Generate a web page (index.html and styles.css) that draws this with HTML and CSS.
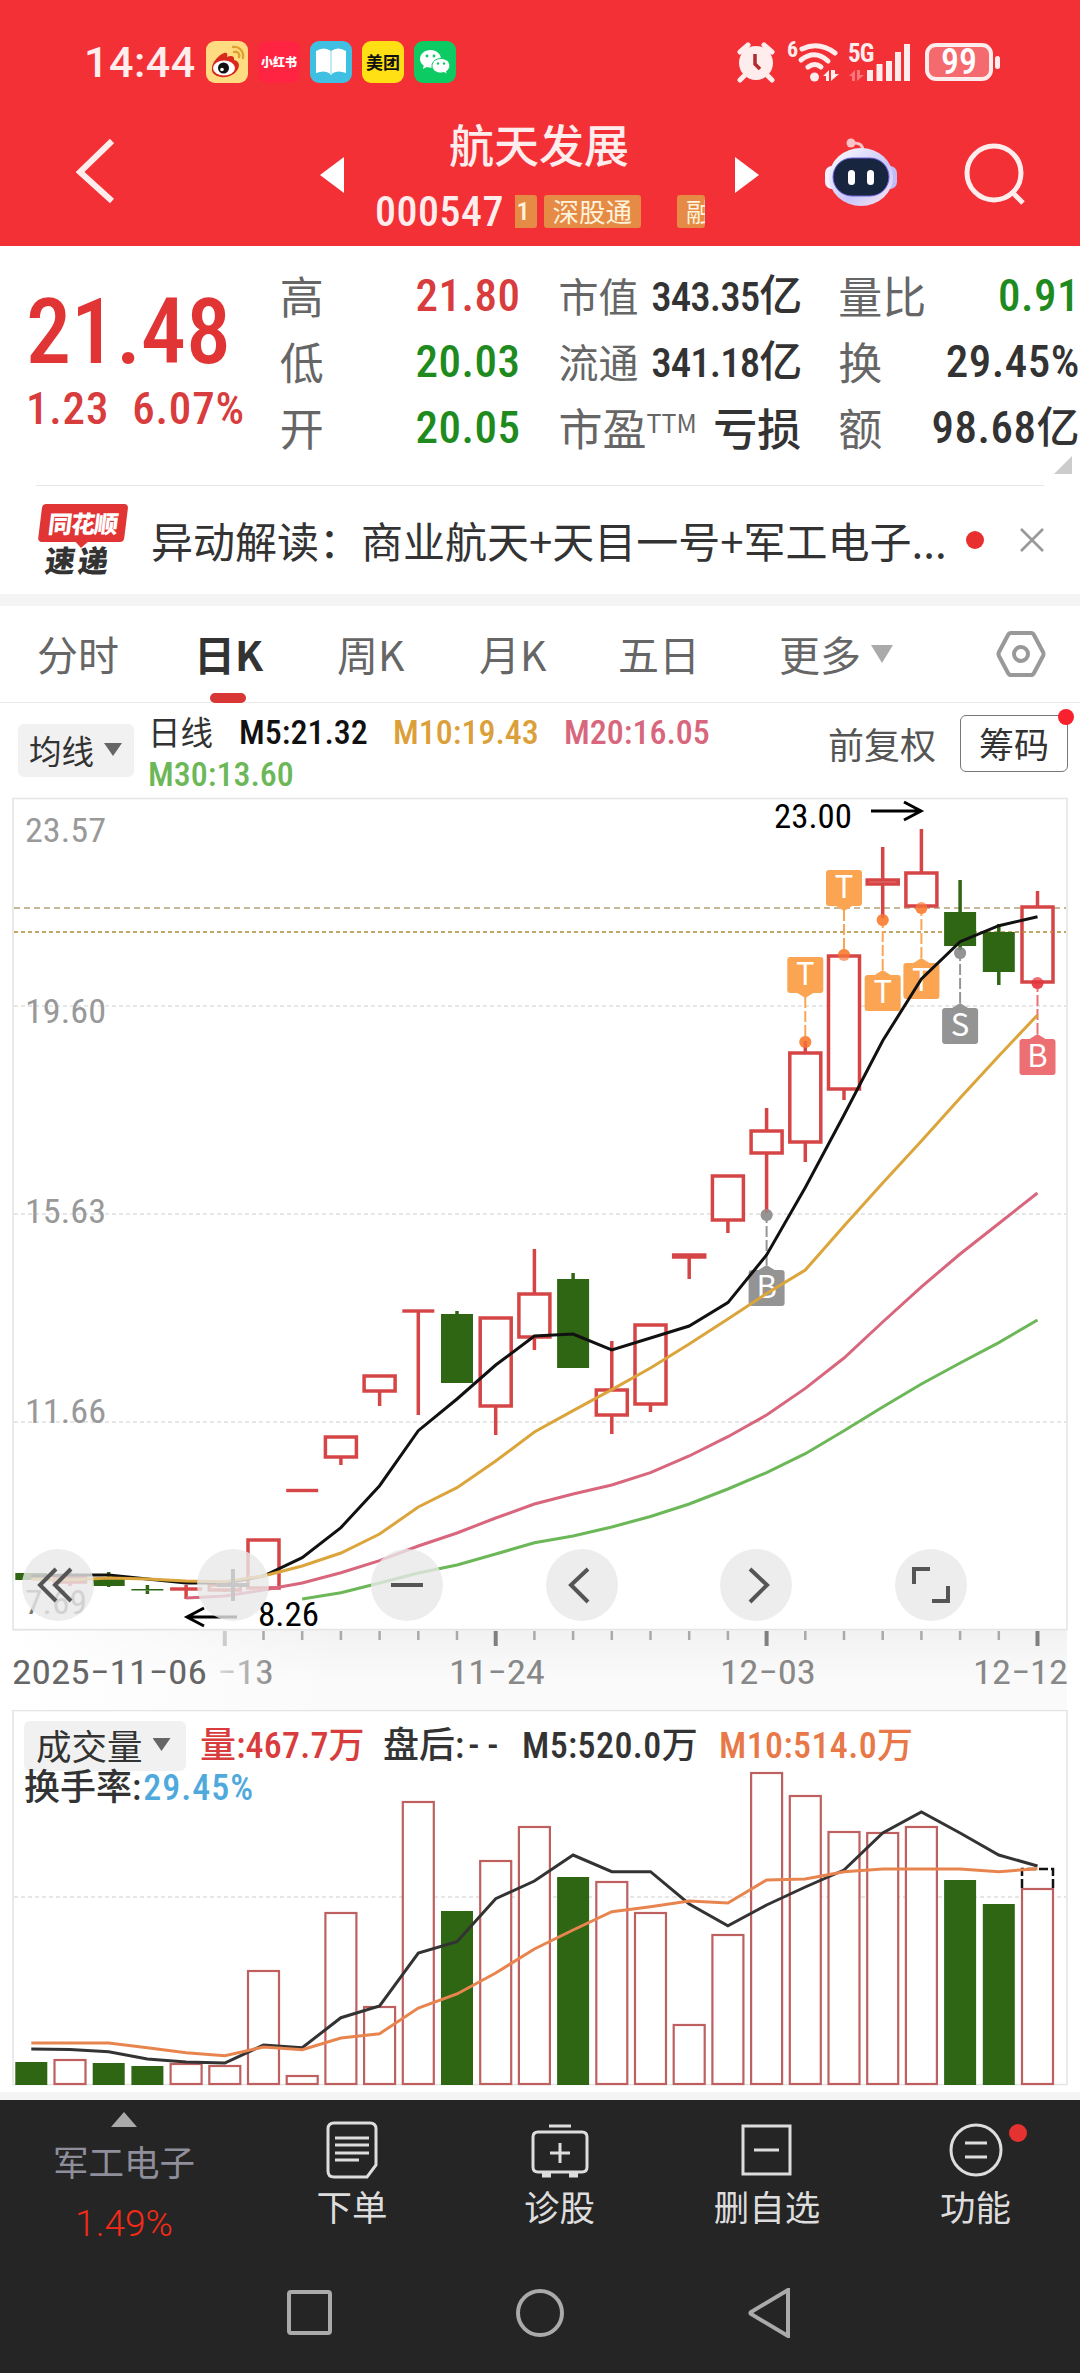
FILE: index.html
```html
<!DOCTYPE html>
<html lang="zh-CN">
<head>
    <meta charset="UTF-8">
    <meta name="viewport" content="width=device-width, initial-scale=1.0">
    <title>航天发展 000547</title>
    <link rel="stylesheet" href="styles.css">
</head>
<body>
    <div class="status-bar">
        <span class="clock num">14:44</span>
        <div class="app-icons">
            <svg class="app" viewBox="0 0 42 42">
                <rect width="42" height="42" rx="9" fill="#ffdc82"/>
                <path d="M6 27c0-6 7-13 12-15 3-1 4 1 3 4 4-2 8-1 7 3 5 1 6 5 4 9-3 6-11 9-17 8C9 35 5 32 6 27z" fill="#d9281c"/>
                <ellipse cx="18" cy="27" rx="11" ry="7.5" fill="#fff"/>
                <circle cx="17.500" cy="27" r="5.500" fill="#111"/>
                <circle cx="16" cy="28.500" r="1.800" fill="#fff"/>
                <path d="M27 6c6-1 11 4 10 11M28 11c4-1 6 2 5 5" fill="none" stroke="#e0a030" stroke-width="2.400" stroke-linecap="round"/>
            </svg>
            <span class="app app-red">小红书</span>
            <svg class="app" viewBox="0 0 42 42">
                <rect width="42" height="42" rx="9" fill="#3fbfe2"/>
                <path d="M6 10q8-5 15 0 7-5 15 0v22q-8-3-13 0l-2 2-2-2q-5-3-13 0z" fill="#fff"/>
                <path d="M21 10v23" stroke="#bfe9f5" stroke-width="2"/>
            </svg>
            <span class="app app-yellow">美团</span>
            <svg class="app" viewBox="0 0 42 42">
                <rect width="42" height="42" rx="9" fill="#0bcb62"/>
                <path d="M16.500 9C10.500 9 6 13 6 18c0 3 1.500 5 3.700 6.600L9 28l3.700-2 4 .7C23 26.500 27 22.700 27 18S22.500 9 16.500 9z" fill="#fff"/>
                <path d="M27 17.500c-5 0-9 3-9 7.300s4 7.300 9 7.300l3-.5 3.200 1.700-.7-2.900c2-1.300 3.300-3.300 3.300-5.600 0-4.300-3.800-7.300-8.800-7.300z" fill="#fff" stroke="#0bcb62"/>
                <g fill="#0bcb62"><circle cx="13" cy="15" r="1.400"/><circle cx="20" cy="15" r="1.400"/><circle cx="24" cy="22.500" r="1.200"/><circle cx="30" cy="22.500" r="1.200"/></g>
            </svg>
        </div>
        <svg class="alarm" width="38" height="40" viewBox="0 0 38 40">
            <circle cx="19" cy="21" r="17" fill="#ffecec"/>
            <path d="M3 10l8-7M35 10l-8-7M7 34l-4 4M31 34l4 4" stroke="#ffecec" stroke-width="5" stroke-linecap="round"/>
            <path d="M18 12v10l5 5" fill="none" stroke="#b52a2e" stroke-width="3.500"/>
        </svg>
        <svg class="wifi" width="54" height="40" viewBox="0 0 54 40">
            <text x="0" y="15" class="tiny">6</text>
            <g fill="none" stroke="#ffecec" stroke-width="5" stroke-linecap="round">
                <path d="M15 7Q32-1 48 11"/><path d="M14 18Q28 7 41 19"/><path d="M21 25q7-5 13 0"/>
            </g>
            <circle cx="27.500" cy="35" r="4.500" fill="#ffecec"/>
            <path d="M36 34l6-6v11h-3v-5zM44 28v11l8-7h-4v-4z" fill="#ffecec"/>
        </svg>
        <svg class="signal" width="64" height="40" viewBox="0 0 64 40">
            <text x="0" y="20" class="net">5G</text>
            <path d="M1 34l6-6v11H4v-5zM9 28v11l7-6h-4v-5z" fill="#f6777a"/>
            <path d="M22 39V28M31.500 39V22M41 39V19M50 39V10M59 39V2" stroke="#ffecec" stroke-width="6"/>
        </svg>
        <div class="battery num">99</div>
        <div class="battery-nub"></div>
    </div>

    <div class="title-bar">
        <svg class="back" width="40" height="66" viewBox="0 0 40 66"><path d="M36 3L4 34l32 29" fill="none" stroke="#ffecec" stroke-width="6"/></svg>
        <svg class="prev" width="24" height="36" viewBox="0 0 24 36"><path d="M24 0v36L0 18z" fill="#fff"/></svg>
        <div class="stock">
            <div class="stock-name">航天发展</div>
            <div class="stock-code">
                <span class="code num">000547</span>
                <span class="tag tag-cut num">1</span>
                <span class="tag">深股通</span>
                <span class="tag tag-last">融</span>
            </div>
        </div>
        <svg class="next" width="24" height="36" viewBox="0 0 24 36"><path d="M0 0v36l24-18z" fill="#fff"/></svg>
        <svg class="robot" width="74" height="70" viewBox="0 0 74 70">
            <defs>
                <linearGradient id="shell" x1="0" y1="0" x2="1" y2="1">
                    <stop offset="0" stop-color="#fff"/><stop offset=".6" stop-color="#c9c6fa"/><stop offset="1" stop-color="#ffe9ee"/>
                </linearGradient>
            </defs>
            <path d="M28 6q11-1 11 8" fill="none" stroke="#fbc3c8" stroke-width="3"/>
            <circle cx="27" cy="6" r="4.500" fill="#fbc3c8"/>
            <rect x="1" y="29" width="14" height="23" rx="7" fill="#f4f0ff"/>
            <rect x="59" y="29" width="14" height="23" rx="7" fill="#c0bcf8"/>
            <ellipse cx="37" cy="40" rx="32" ry="29" fill="url(#shell)"/>
            <rect x="9" y="21" width="56" height="38" rx="19" fill="#17253f" stroke="#6d62dd"/>
            <rect x="24" y="33" width="7" height="15" rx="3.500" fill="#fff"/>
            <rect x="43" y="33" width="7" height="15" rx="3.500" fill="#fff"/>
        </svg>
        <svg class="search" width="62" height="62" viewBox="0 0 62 62"><circle cx="30" cy="30" r="27" fill="none" stroke="#ffecec" stroke-width="5"/><path d="M48 49l11 11" stroke="#ffecec" stroke-width="5"/></svg>
    </div>

    <div class="quote">
        <div class="price-box">
            <div class="price num">21.48</div>
            <div class="change num"><span>1.23</span><span>6.07%</span></div>
        </div>
        <div class="col col-a">
            <div class="row"><span class="label">高</span><span class="val num red">21.80</span></div>
            <div class="row"><span class="label">低</span><span class="val num green">20.03</span></div>
            <div class="row"><span class="label">开</span><span class="val num green">20.05</span></div>
        </div>
        <div class="col col-b">
            <div class="row small"><span class="label">市值</span><span class="val num">343.35<i>亿</i></span></div>
            <div class="row small"><span class="label">流通</span><span class="val num">341.18<i>亿</i></span></div>
            <div class="row"><span class="label">市盈<sup>TTM</sup></span><span class="val word">亏损</span></div>
        </div>
        <div class="col col-c">
            <div class="row"><span class="label">量比</span><span class="val num green">0.91</span></div>
            <div class="row"><span class="label">换</span><span class="val num">29.45%</span></div>
            <div class="row"><span class="label">额</span><span class="val num">98.68<i>亿</i></span></div>
        </div>
        <div class="corner"></div>
    </div>

    <div class="news">
        <div class="news-logo">
            <div class="logo-top">同花顺</div>
            <div class="logo-bottom">速递</div>
        </div>
        <div class="news-text">异动解读：商业航天+天目一号+军工电子...</div>
        <div class="news-dot"></div>
        <svg class="close" width="26" height="26" viewBox="0 0 26 26"><path d="M2 2l22 22M24 2L2 24" stroke="#999" stroke-width="2.600"/></svg>
    </div>

    <div class="tabs">
        <span class="tab t1">分时</span>
        <span class="tab t2 active">日K</span>
        <span class="tab t3">周K</span>
        <span class="tab t4">月K</span>
        <span class="tab t5">五日</span>
        <span class="tab t6">更多</span>
        <div class="arrow-down light"></div>
        <svg class="setting" width="50" height="48" viewBox="0 0 50 48"><path d="M15 3h20q2 0 3 2l9 17q1 2 0 4l-9 17q-1 2-3 2H15q-2 0-3-2L3 26q-1-2 0-4l9-17q1-2 3-2z" fill="none" stroke="#999" stroke-width="4"/><circle cx="25" cy="24" r="7" fill="none" stroke="#999" stroke-width="4"/></svg>
    </div>

    <div class="ma-bar">
        <div class="chip">均线<div class="arrow-down"></div></div>
        <div class="ma-list">
            <span class="ma-name">日线</span>
            <span class="num m5">M5:21.32</span>
            <span class="num m10">M10:19.43</span>
            <span class="num m20">M20:16.05</span>
            <span class="num m30">M30:13.60</span>
        </div>
        <span class="adjust">前复权</span>
        <div class="chips-btn">筹码</div>
    </div>

    <div class="k-chart">
        <svg id="kline" width="1080" height="920" viewBox="0 790 1080 920"></svg>
        <div class="tools">
            <span class="tool"><svg viewBox="0 0 72 72"><path d="M34 20L18 36l16 16M49 20L33 36l16 16"/></svg></span>
            <span class="tool faint"><svg viewBox="0 0 72 72"><path d="M36 20v32M20 36h32"/></svg></span>
            <span class="tool"><svg viewBox="0 0 72 72"><path d="M20 36h32"/></svg></span>
            <span class="tool"><svg viewBox="0 0 72 72"><path d="M42 20L25 36l17 17"/></svg></span>
            <span class="tool"><svg viewBox="0 0 72 72"><path d="M30 20l17 16-17 17"/></svg></span>
            <span class="tool"><svg viewBox="0 0 72 72"><path d="M19 35V20h16M53 37v15H37"/></svg></span>
        </div>
    </div>

    <div class="vol-chart">
        <svg id="volume" width="1080" height="382" viewBox="0 1710 1080 382"></svg>
        <div class="vol-legend">
            <div class="vol-row">
                <div class="chip chip-vol">成交量<div class="arrow-down"></div></div>
                <span class="num v1 red">量:467.7万</span>
                <span class="num v2">盘后:<i>--</i></span>
                <span class="num v3">M5:520.0万</span>
                <span class="num v4">M10:514.0万</span>
            </div>
            <div class="turnover num">换手率:<span>29.45%</span></div>
        </div>
    </div>

    <div class="toolbar">
        <div class="item index">
            <div class="arrow-up"></div>
            <div class="index-name">军工电子</div>
            <div class="index-rate num">1.49%</div>
        </div>
        <div class="item">
            <svg viewBox="0 0 60 60"><path d="M12 3h36q6 0 6 6v36L45 57H12q-6 0-6-6V9q0-6 6-6z"/><path d="M13 18h34M13 25h34M13 33h34M13 40h24"/></svg>
            下单
        </div>
        <div class="item">
            <svg viewBox="0 0 60 60"><path d="M19 6h22M8 12h44q5 0 5 5v30q0 5-5 5H8q-5 0-5-5V17q0-5 5-5zM30 23v20M20 33h20"/><path d="M12 55h9M39 55h9" stroke-width="5"/></svg>
            诊股
        </div>
        <div class="item">
            <svg viewBox="0 0 60 60"><path d="M6 6h47v48H6zM17 30h25"/></svg>
            删自选
        </div>
        <div class="item more">
            <svg viewBox="0 0 60 60"><circle cx="30" cy="30" r="25"/><path d="M19 23h22M19 37h22"/></svg>
            功能
            <div class="more-dot"></div>
        </div>
    </div>

    <div class="nav">
        <svg width="50" height="50" viewBox="0 0 50 50"><rect x="4" y="4" width="41" height="41" rx="2"/></svg>
        <svg width="50" height="50" viewBox="0 0 50 50"><circle cx="25" cy="25" r="22"/></svg>
        <svg width="50" height="50" viewBox="0 0 50 50"><path d="M43 2v46L6 26q-1-1 0-2z"/></svg>
    </div>

    <script src="script.js"></script>
</body>
</html>
```

FILE: styles.css
```css
body{
  margin:0;
  width:1080px;
  background:#fff;
  font-family:"Noto Sans CJK SC", sans-serif;
  color:#333;
  overflow-x:hidden;
}
.num{
  font-family:Roboto, "Noto Sans CJK SC", sans-serif;
  font-stretch:75%;
  font-weight:500;
  white-space:nowrap;
}
i{ font-style:normal; }
.red{ color:#d83c3c; }
.green{ color:#1f8b1f; }

/* status bar */
.status-bar{
  display:flex;
  align-items:center;
  height:124px;
  background:#f23036;
  color:#ffecec;
}
.status-bar svg{ overflow:visible; }
.clock{
  width:110px;
  margin-left:84px;
  font-size:43px;
  font-stretch:90%;
  letter-spacing:.5px;
}
.app-icons{
  display:flex;
  gap:10px;
  margin-left:12px;
}
.app{
  width:42px;
  height:42px;
  border-radius:9px;
  line-height:42px;
  text-align:center;
  white-space:nowrap;
}
.app-red{
  background:#ff2442;
  color:#fff;
  font-size:12px;
  font-weight:900;
}
.app-yellow{
  background:#ffe014;
  color:#111;
  font-size:17px;
  font-weight:700;
}
.alarm{ margin-left:281px; }
.wifi{ margin-left:12px; }
.signal{ margin-left:7px; }
.tiny{ font:700 22px Roboto, sans-serif; font-stretch:75%; fill:#ffecec; }
.net{ font:700 25px Roboto, sans-serif; font-stretch:75%; fill:#ffecec; letter-spacing:-1px; }
.battery{
  box-sizing:border-box;
  width:68px;
  height:38px;
  margin-left:13px;
  border:4px solid #ffecec;
  border-radius:11px;
  background:#f56a6e;
  color:#fff;
  font-size:36px;
  font-stretch:85%;
  line-height:31px;
  text-align:center;
}
.battery-nub{
  width:5px;
  height:13px;
  margin-left:2px;
  border-radius:3px;
  background:#ffecec;
}

/* title */
.title-bar{
  display:flex;
  height:122px;
  background:#f23036;
  color:#ffecec;
}
.back{ margin:14px 0 0 76px; }
.prev{ margin:33px 0 0 204px; }
.stock{
  width:330px;
  margin-left:31px;
}
.stock-name{
  height:58px;
  margin-right:2px;
  font-size:45px;
  font-weight:500;
  line-height:40px;
  text-align:center;
}
.stock-code{
  display:flex;
  align-items:center;
  height:58px;
  overflow:hidden;
}
.code{
  width:140px;
  font-size:42px;
  letter-spacing:.5px;
}
.tag{
  height:33px;
  margin-right:36px;
  padding:0 9px;
  border-radius:3px;
  background:#e58b45;
  color:#fff3dc;
  font-size:26.500px;
  line-height:31px;
  white-space:nowrap;
}
.tag-cut{
  width:20px;
  margin-right:7px;
  padding:0 0 0 2px;
  border-radius:0 3px 3px 0;
}
.tag-last{
  flex:none;
  width:19px;
  margin-right:0;
  padding-right:0;
  overflow:hidden;
}
.next{ margin:33px 0 0 30px; }
.robot{ margin:13px 0 0 65px; }
.search{ margin:19px 0 0 66px; }

/* quote */
.quote{
  position:relative;
  display:flex;
  height:240px;
}
.quote::after{
  content:"";
  position:absolute;
  left:36px;
  right:36px;
  bottom:0;
  height:1px;
  background:#e6e6e6;
}
.price-box{
  width:254px;
  padding:45px 0 0 26px;
  color:#e13434;
}
.price{
  height:83px;
  font-size:90px;
  line-height:84px;
}
.change{
  display:flex;
  gap:23px;
  font-size:45px;
  line-height:70px;
  letter-spacing:.8px;
  color:#d83c3c;
}
.col{ padding-top:16px; }
.row{
  display:flex;
  align-items:center;
  justify-content:space-between;
  height:66px;
  font-size:44px;
  line-height:64px;
  white-space:nowrap;
}
.row .num{ padding-top:2px; line-height:68px; }
.small{ font-size:40px; }
.row .val{ font-size:45px; letter-spacing:.5px; }
.row.small .val{
  font-size:41px;
  letter-spacing:-1px;
}
.small i{ font-size:40px; }
.label{ color:#666; }
.label sup{
  font-size:25px;
  line-height:0;
  vertical-align:13px;
}
.val i{ font-size:43px; }
.row .word{ font-weight:500; font-size:44px; letter-spacing:0; }
.col-a{ width:241px; }
.col-b{ width:243px; margin-left:38px; }
.col-c{ width:242px; margin-left:37px; }
.corner{
  position:absolute;
  right:8px;
  bottom:12px;
  border-left:18px solid transparent;
  border-bottom:18px solid #ccc;
}

/* news */
.news{
  display:flex;
  align-items:center;
  height:108px;
  border-bottom:12px solid #f4f4f4;
}
.news-logo{
  width:86px;
  margin-left:38px;
  text-align:center;
  transform:skewX(-7deg);
}
.logo-top{
  height:38px;
  border-radius:4px;
  background:#e13434;
  color:#fff;
  font-size:24px;
  font-weight:900;
  letter-spacing:-1px;
  line-height:37px;
}
.logo-bottom{
  position:relative;
  height:34px;
  color:#333;
  font-size:30px;
  font-weight:900;
  letter-spacing:3px;
  line-height:34px;
}
.logo-bottom::before{
  content:"";
  position:absolute;
  left:38px;
  top:0;
  border:6px solid transparent;
  border-top-color:#e13434;
  border-bottom:0;
}
.news-text{
  width:810px;
  margin-left:27px;
  font-size:42px;
  line-height:58px;
  white-space:nowrap;
}
.news-dot{
  width:18px;
  height:18px;
  margin-left:5px;
  border-radius:50%;
  background:#e8302f;
}
.close{ margin-left:35px; }

/* tabs */
.tabs{
  display:flex;
  align-items:center;
  height:96px;
  border-bottom:1px solid #e8e8e8;
  color:#666;
  font-size:41px;
  line-height:56px;
}
.tab{ position:relative; top:-1px; white-space:nowrap; }
.t1{ width:157px; margin-left:37px; }
.t2{ width:143px; }
.t3{ width:142px; }
.t4{ width:139px; }
.t5{ width:161px; }
.t6{ width:92px; }
.active{ color:#333; font-weight:700; }
.active::after{
  content:"";
  position:absolute;
  left:16px;
  bottom:-22px;
  width:36px;
  height:10px;
  border-radius:5px;
  background:#d93636;
}
.arrow-down{
  width:18px;
  height:13px;
  background:#666;
  clip-path:polygon(0 0, 100% 0, 50% 100%);
}
.light{ width:22px; height:18px; background:#aaa; }
.setting{ margin-left:103px; }

/* moving averages */
.ma-bar{
  display:flex;
  height:87px;
}
.chip{
  display:flex;
  align-items:center;
  gap:10px;
  box-sizing:border-box;
  width:116px;
  height:53px;
  margin:21px 0 0 18px;
  padding:0 0 2px 11px;
  border-radius:6px;
  background:#f1f1f1;
  font-size:32.500px;
  white-space:nowrap;
}
.ma-list{
  display:flex;
  flex-wrap:wrap;
  align-content:flex-start;
  width:640px;
  margin:8px 0 0 14px;
  font-size:34px;
  line-height:42px;
}
.ma-name{ width:91px; font-size:32.500px; line-height:40px; }
.m5{ width:154px; color:#111; }
.m10{ width:171px; color:#dba03a; }
.m20{ width:170px; color:#d8667d; }
.m30{ color:#6cb758; }
.adjust{
  width:132px;
  margin-left:40px;
  font-size:36px;
  line-height:80px;
  color:#555;
}
.chips-btn{
  position:relative;
  box-sizing:border-box;
  width:108px;
  height:57px;
  margin-top:12px;
  border:1px solid #777;
  border-radius:6px;
  font-size:35px;
  line-height:54px;
  text-align:center;
}
.chips-btn::after{
  content:"";
  position:absolute;
  top:-7px;
  right:-7px;
  width:16px;
  height:16px;
  border-radius:50%;
  background:#f8222e;
}

/* charts */
.k-chart, .vol-chart{ position:relative; }
.k-chart svg, .vol-chart svg{ display:block; }
.k-chart{ height:920px; }
.vol-chart{
  height:382px;
  border-bottom:8px solid #f4f4f4;
}
.tools{
  position:absolute;
  left:22px;
  top:759px;
  display:flex;
  gap:102.500px;
}
.tool{
  width:72px;
  height:72px;
  border-radius:50%;
  background:rgba(233,233,233,.8);
}
.tool path{
  fill:none;
  stroke:#555;
  stroke-width:4;
}
.faint path{ stroke:#c8c8c8; }
.axis{ font:450 34px Roboto, sans-serif; font-stretch:78%; }
.vol-legend{
  position:absolute;
  left:24px;
  top:11px;
  font-size:36px;
}
.vol-row{
  display:flex;
  height:50px;
  line-height:51px;
}
.chip-vol{
  width:162px;
  height:50px;
  margin:0;
  padding:0 0 3px 12px;
  font-size:35.500px;
}
.v1{ width:183px; margin-left:14px; letter-spacing:.2px; }
.v2{ width:139px; }
.v2 i{ letter-spacing:8px; margin-left:4px; }
.v3{ width:197px; letter-spacing:.4px; }
.v4{ color:#e87847; letter-spacing:.4px; }
.turnover{ line-height:34px; }
.turnover span{ margin-left:2px; color:#4fa9dd; letter-spacing:1px; }

/* bottom */
.toolbar{
  display:grid;
  grid-template-columns:248px 208px 207px 208px 209px;
  height:160px;
  background:#252525;
  color:#ddd;
}
.item{
  position:relative;
  display:flex;
  flex-direction:column;
  align-items:center;
  box-sizing:border-box;
  padding-top:20px;
  font-size:35.500px;
  line-height:52px;
}
.item svg{
  width:60px;
  height:60px;
  fill:none;
  stroke:#ddd;
  stroke-width:3;
}
.index{ padding-top:12px; }
.arrow-up{
  width:26px;
  height:15px;
  background:#aaa;
  clip-path:polygon(50% 0, 100% 100%, 0 100%);
}
.index-name{
  margin-top:8px;
  color:#8f8f9c;
}
.index-rate{
  margin-top:11px;
  color:#f52a18;
  font-size:37px;
  font-stretch:88%;
  font-weight:300;
}
.more-dot{
  position:absolute;
  left:138px;
  top:24px;
  width:18px;
  height:18px;
  border-radius:50%;
  background:#e53130;
}
.nav{
  display:flex;
  gap:180px;
  box-sizing:border-box;
  height:113px;
  padding:28px 0 0 285px;
  background:#252525;
}
.nav svg{
  fill:none;
  stroke:#aaa;
  stroke-width:4;
}
```

FILE: script.js
```js
const RED = '#d64545';
const GREEN = '#2f6614';
const X = (i) => +(31.3 + i * 38.7).toFixed(1);

// [open/close top, bottom, high, low, up?]
const candles = [
    [1573, 1580, 1573, 1580, 0], [1577, 1582, 1572, 1586, 1], [1579, 1586, 1572, 1587, 0],
    [1589, 1590.5, 1585, 1594, 0], [1589, 1590, 1585, 1599, 1], [1585, 1590, 1583, 1592, 1],
    [1540, 1588, 1540, 1588, 1], [1490.5, 1490.5, 1490.5, 1490.5, 1], [1437, 1457, 1437, 1465, 1],
    [1376, 1391, 1376, 1406, 1], [1311, 1311, 1311, 1415, 1], [1314, 1383, 1311, 1383, 0],
    [1318, 1406, 1318, 1435, 1], [1294, 1337, 1249, 1350, 1], [1279, 1368, 1273, 1368, 0],
    [1390, 1415, 1341, 1434, 1], [1325, 1404, 1325, 1412, 1], [1255, 1257, 1255, 1279, 1],
    [1176, 1220, 1176, 1233, 1], [1131, 1153, 1108, 1213, 1], [1053, 1142, 1041, 1162, 1],
    [956, 1089, 956, 1100, 1], [880, 884, 847, 918, 1], [873, 906, 829, 906, 1],
    [912, 946, 880, 950, 0], [932, 972, 924, 985, 0], [907, 982, 891, 982, 1]
];

const ma = [
    { color: '#111', from: 0, data: [1576, 1575, 1575, 1579, 1583, 1583, 1576, 1557.600, 1527.600, 1485.700, 1430.700, 1399, 1365, 1336, 1334, 1350, 1338, 1326, 1302.600, 1255, 1187.500, 1115, 1040.700, 979, 941.700, 925.700, 916.700] },
    { color: '#dba53c', from: 0, data: [1579, 1580, 1578, 1579, 1581, 1581.700, 1576, 1566, 1553, 1534, 1507, 1487.700, 1461, 1432, 1410.600, 1389.600, 1368, 1344, 1319, 1293.500, 1270, 1226, 1183, 1141, 1098, 1056, 1015] },
    { color: '#d8667d', from: 4, data: [1598, 1596, 1590, 1583, 1572.700, 1560.700, 1546, 1533, 1518, 1504, 1494, 1485, 1472.600, 1456, 1436.700, 1415, 1388.400, 1358, 1322, 1286.800, 1254, 1223.500, 1193] },
    { color: '#6cb758', from: 7, data: [1599, 1592.700, 1583, 1573, 1565, 1554, 1542.700, 1536, 1527, 1516.500, 1504, 1489, 1472.600, 1453.700, 1430.700, 1407, 1384, 1363, 1342.600, 1320] }
];

// trade flags: candle, letter, box top, dot y, colour
const flags = [
    [20, 'T', 957, 1042, '#fba452'], [21, 'T', 870, 955, '#fba452'], [22, 'T', 975, 920, '#fba452'],
    [23, 'T', 963, 908, '#fba452'], [24, 'S', 1008, 953, '#949494'], [26, 'B', 1039, 983, '#ec7073'],
    [19, 'B', 1270, 1215, '#949494']
];

// [bar top, up?]
const volumes = [
    [2062, 0], [2060, 1], [2063, 0], [2066, 0], [2064, 1], [2066, 1], [1971, 1], [2076, 1], [1913, 1],
    [2007, 1], [1802, 1], [1911, 0], [1861, 1], [1827, 1], [1877, 0], [1882, 1], [1913, 1], [2025, 1],
    [1935, 1], [1773, 1], [1796, 1], [1832, 1], [1833, 1], [1827, 1], [1880, 0], [1904, 0], [1889, 1]
];
const volM5 = [2049, 2049.500, 2051.700, 2059, 2062, 2063, 2045, 2047.700, 2017.700, 2006, 1953, 1941.700, 1898.700, 1881, 1855, 1871.700, 1871.700, 1904, 1925.700, 1905, 1887, 1870, 1833, 1812, 1833, 1855, 1866];
const volM10 = [2043, 2043, 2043, 2047.700, 2052.700, 2055.700, 2047, 2049.700, 2038, 2033.700, 2008, 1994, 1973, 1949, 1930, 1911.700, 1906.700, 1901, 1903, 1880, 1879, 1871.700, 1869, 1869, 1869, 1871.700, 1868.700];

const hline = (y, color, dash) => `<path d="M14 ${y}H1066" stroke="${color}" stroke-width="1.500" stroke-dasharray="${dash}"/>`;
const curve = (data, from, color, w) =>
    `<polyline fill="none" stroke="${color}" stroke-width="${w}" points="${data.map((y, i) => X(i + from) + ',' + y).join(' ')}"/>`;
const label = (x, y, text, color, len, weight) =>
    `<text class="axis" x="${x}" y="${y}" fill="${color}" textLength="${len}" lengthAdjust="spacingAndGlyphs"${weight ? ` style="font-weight:${weight}"` : ''}>${text}</text>`;

function drawKline() {
    let s = `<defs>
        <linearGradient id="axisBg" x1="0" y1="0" x2="0" y2="1"><stop offset="0" stop-color="#f2f2f2"/><stop offset=".6" stop-color="#fafafa"/></linearGradient>
        <linearGradient id="fade"><stop offset="0" stop-color="#fff"/><stop offset="1" stop-color="#fff" stop-opacity="0"/></linearGradient>
        <linearGradient id="dateFade"><stop offset="0" stop-color="#ddd"/><stop offset="1" stop-color="#888"/></linearGradient>
    </defs>
    <rect x="13" y="1630" width="1054" height="80" fill="url(#axisBg)"/>
    <rect x="13" y="1631" width="330" height="79" fill="url(#fade)"/>
    <rect x="13" y="798.500" width="1054" height="831" fill="none" stroke="#e4e4e4" stroke-width="1.500"/>`;
    [1006, 1214, 1422].forEach((y) => { s += hline(y, '#dedede', '4 3'); });
    s += hline(908, '#b5a377', '6 4') + hline(932, '#b08b36', '4 3');
    s += label(25, 842, '23.57', '#999', 81) + label(25, 1023, '19.60', '#999', 81) + label(25, 1223, '15.63', '#999', 81);
    s += label(25, 1423, '11.66', '#999', 81) + label(25, 1614, '7.69', '#777', 62);

    flags.forEach(([i, , top, dot, color]) => {
        const edge = dot > top ? top + 40 : top - 5;
        s += `<path d="M${X(i)} ${edge}V${dot}" stroke="${color}" stroke-width="2" stroke-dasharray="11 3"/><circle cx="${X(i)}" cy="${dot}" r="6" fill="${color}"/>`;
    });
    candles.forEach(([top, bottom, high, low, up], i) => {
        const x = X(i);
        const color = up ? RED : GREEN;
        s += `<path d="M${x} ${high}V${top}M${x} ${bottom}V${low}" stroke="${color}" stroke-width="3.500"/>`;
        if (up && bottom - top > 1) {
            s += `<rect x="${x - 15.5}" y="${top}" width="31" height="${bottom - top}" fill="${i === 22 ? '#f59a9a' : '#fff'}" stroke="${RED}" stroke-width="3.500"/>`;
        } else {
            s += `<rect x="${x - 16}" y="${up ? top - 1.7 : top}" width="32" height="${up ? 3.4 : bottom - top}" fill="${color}"/>`;
        }
    });
    s += `<path d="M1022 932h31" stroke="#b08b36" stroke-width="1.500" stroke-dasharray="4 3"/>`;
    flags.forEach(([i, letter, top, dot, color]) => {
        const x = X(i);
        const tip = dot > top ? `M${x - 8} ${top + 36}h16l-8 5z` : `M${x - 8} ${top}h16l-8 -5z`;
        const dotColor = letter === 'T' ? '#f97c3c' : i === 26 ? '#e8323c' : color;
        s += `<circle cx="${x}" cy="${dot}" r="6" fill="${dotColor}" opacity=".7"/>
            <rect x="${x - 18}" y="${top}" width="36" height="36" rx="3" fill="${color}"/><path d="${tip}" fill="${color}"/>
            <text x="${x}" y="${top + 28}" text-anchor="middle" fill="#fff" style="font:31px 'Noto Sans CJK SC',sans-serif">${letter}</text>`;
    });
    ma.forEach((m) => { s += curve(m.data, m.from, m.color, 3); });

    s += label(774, 828, '23.00', '#000', 78, 400) + label(258, 1626, '8.26', '#000', 61, 400);
    s += `<path d="M871 811h50M904 802l17 9-17 9M237 1617h-50M204 1608l-17 9 17 9" fill="none" stroke="#000" stroke-width="3"/>`;

    for (let i = 5; i <= 26; i++) {
        const big = i === 5 || i === 12 || i === 19 || i === 26;
        s += `<path d="M${X(i)} 1631v${big ? 15 : 9}" stroke="${i === 5 ? '#ccc' : big ? '#808080' : '#aaa'}" stroke-width="${big ? 4 : 2.5}"/>`;
    }
    s += label(12, 1684, '2025−11−06', '#666', 195) + label(217, 1684, '−13', 'url(#dateFade)', 57);
    s += label(449, 1684, '11−24', '#888', 96) + label(720, 1684, '12−03', '#888', 96) + label(973, 1684, '12−12', '#888', 95);
    document.getElementById('kline').innerHTML = s;
}

function drawVolume() {
    let s = `<rect x="13" y="1710.500" width="1054" height="374" fill="none" stroke="#e4e4e4" stroke-width="1.500"/>` + hline(1897, '#dedede', '4 3');
    volumes.forEach(([top, up], i) => {
        const x = X(i);
        s += up
            ? `<rect x="${x - 15.500}" y="${top}" width="31" height="${2084 - top}" fill="#fff" stroke="#bf6060" stroke-width="2.200"/>`
            : `<rect x="${x - 16}" y="${top}" width="32" height="${2085 - top}" fill="${GREEN}"/>`;
    });
    // forecast outline above the last bar
    s += `<path d="M1022 1888V1869H1053V1888" fill="none" stroke="#111" stroke-width="2.500" stroke-dasharray="9 3"/>`;
    s += curve(volM5, 0, '#333', 3) + curve(volM10, 0, '#e8854f', 3);
    document.getElementById('volume').innerHTML = s;
}

drawKline();
drawVolume();
```
